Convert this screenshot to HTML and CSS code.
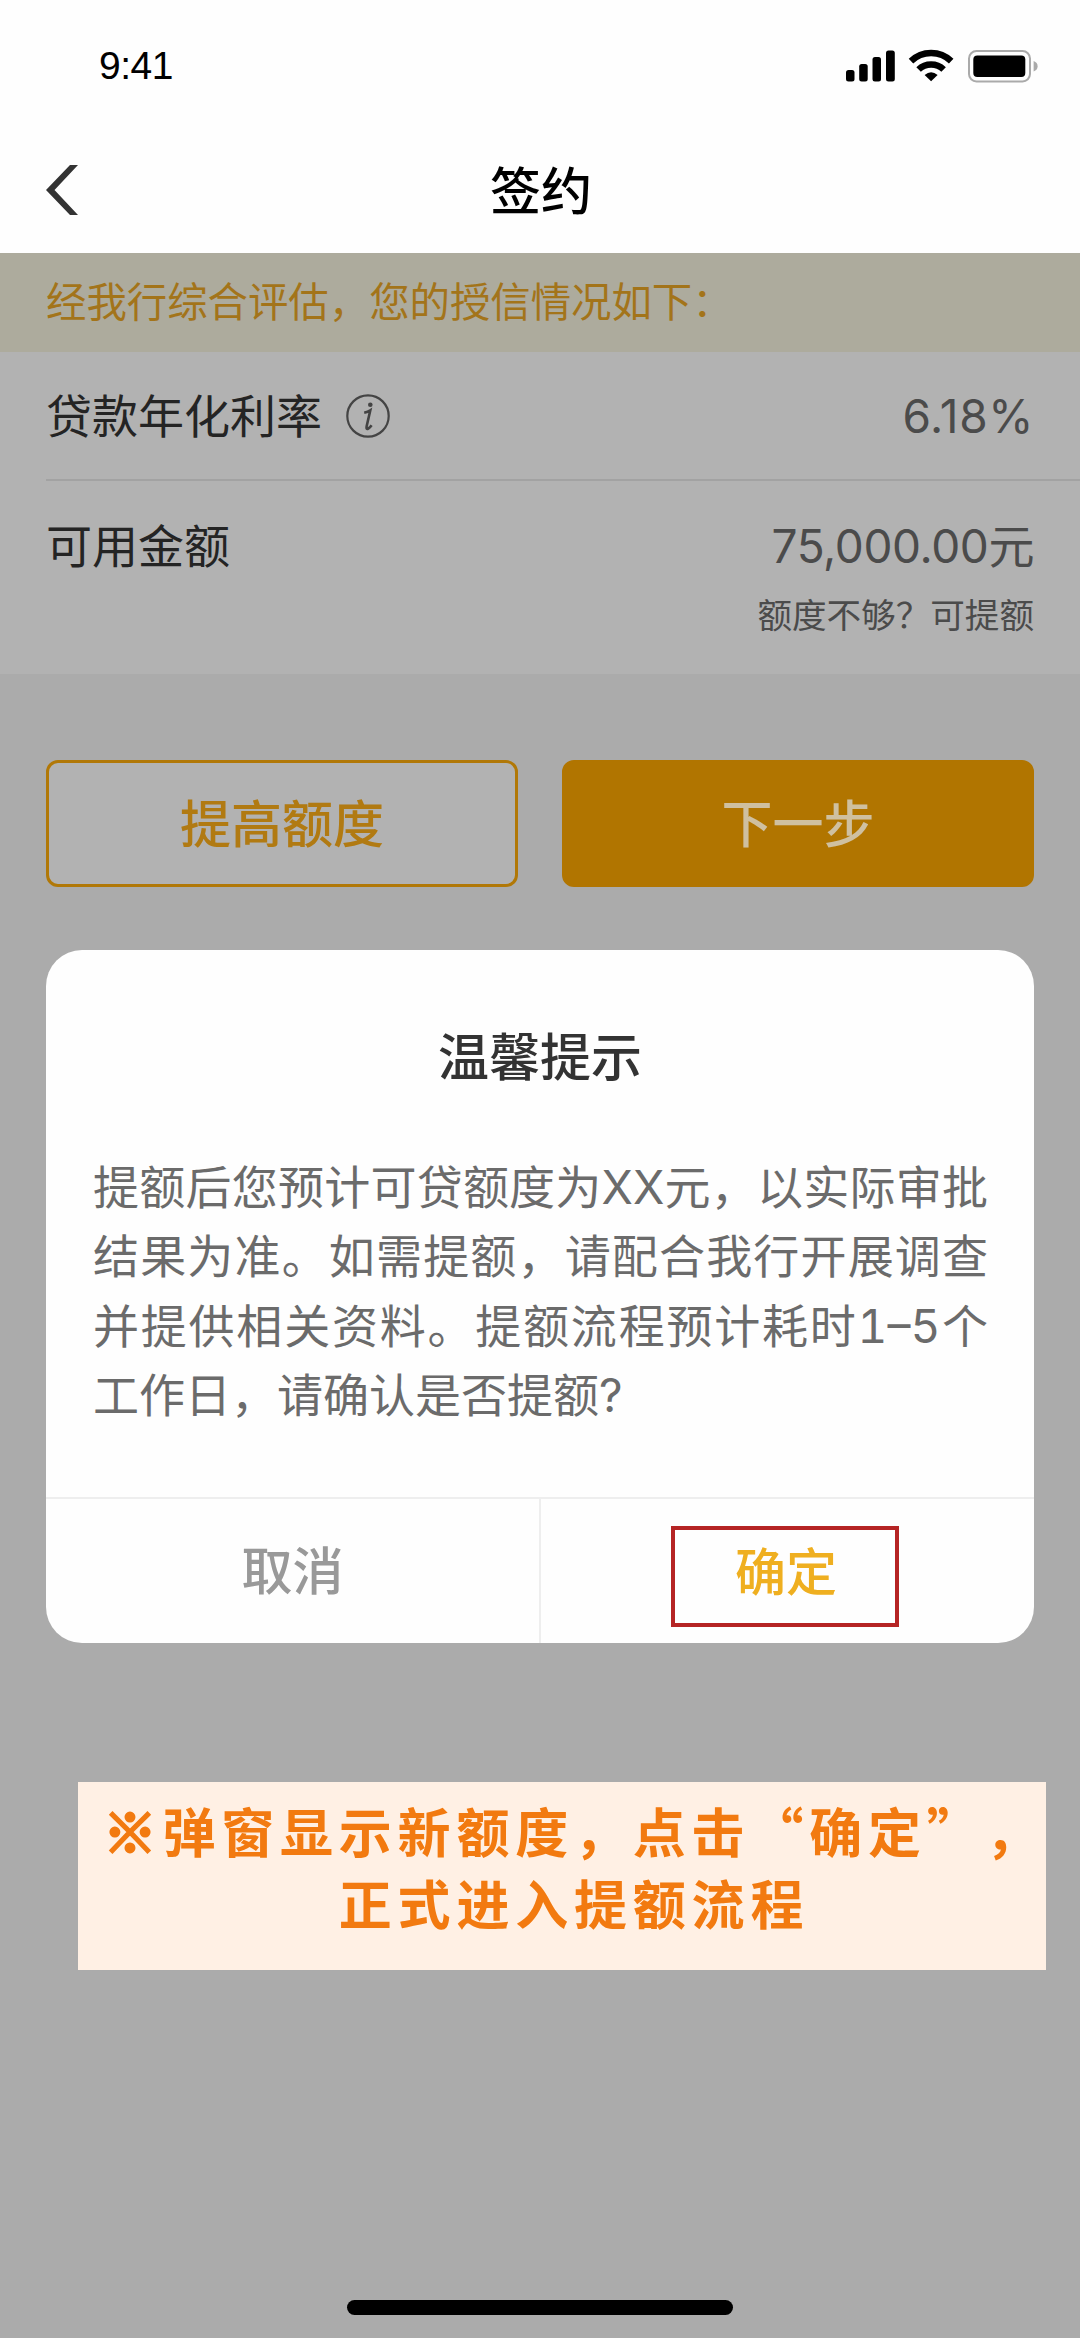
FILE: index.html
```html
<!DOCTYPE html>
<html lang="zh-CN">
<head>
<meta charset="utf-8">
<title>签约</title>
<link rel="stylesheet" href="styles.css">
</head>
<body>
<div class="screen">
  <header class="top">
    <div class="status">
      <span class="time">9:41</span>
      <svg class="status-icons" width="194" height="34" viewBox="845 49 194 34">
        <rect x="846" y="70" width="8.500" height="11.500" rx="2.500"/>
        <rect x="859.200" y="64" width="8.500" height="17.500" rx="2.500"/>
        <rect x="872.500" y="57" width="8.500" height="24.500" rx="2.500"/>
        <rect x="886" y="50.500" width="8.800" height="31" rx="2.500"/>
        <g fill="none" stroke="#000" stroke-width="6.500">
          <path d="M911 61.200A29 29 0 0 1 951.200 61.200"/>
          <path d="M918.600 69.500A18 18 0 0 1 943.600 69.500"/>
        </g>
        <path d="M924.600 75Q931.100 69.500 937.600 75L931.100 81.200Z"/>
        <rect x="969" y="51" width="61" height="30.500" rx="7.500" fill="none" stroke="#aaa" stroke-width="2"/>
        <rect x="973.300" y="55.500" width="52" height="21.500" rx="4"/>
        <path d="M1033.600 61Q1037.600 62.500 1037.600 66.200T1033.600 71.500Z" fill="#aaa"/>
      </svg>
    </div>
    <nav class="nav">
      <svg class="back" width="32" height="50" viewBox="0 0 32 50"><path d="M24 0H32L8.500 25L32 50H24L0 25Z" fill="#333"/></svg>
      <h1 class="nav-title">签约</h1>
    </nav>
  </header>

  <p class="notice">经我行综合评估，您的授信情况如下：</p>

  <section class="info">
    <div class="row rate">
      <span class="label">贷款年化利率</span>
      <svg class="info-icon" width="44" height="44" viewBox="0 0 44 44">
        <circle cx="22" cy="22" r="20.700" fill="none" stroke="#444" stroke-width="2.200"/>
        <circle cx="24.300" cy="10.800" r="2.300" fill="#444"/>
        <path d="M18.200 18.700Q22 17.800 24.300 16.300L20.600 32.500Q20 35.800 22.300 34.500Q24 33.500 25.600 31.200" fill="none" stroke="#444" stroke-width="2.600"/>
      </svg>
      <span class="value">6.18%</span>
    </div>
    <div class="row amount">
      <span class="label">可用金额</span>
      <div class="amount-values">
        <span class="value">75,000.00元</span>
        <span class="hint">额度不够？可提额</span>
      </div>
    </div>
  </section>

  <div class="actions">
    <button class="btn outline">提高额度</button>
    <button class="btn solid">下一步</button>
  </div>

  <section class="dialog">
    <h2 class="dialog-title">温馨提示</h2>
    <div class="dialog-body">
      <p class="line">提额后您预计可贷额度为XX元，以实际审批</p>
      <p class="line">结果为准。如需提额，请配合我行开展调查</p>
      <p class="line">并提供相关资料。提额流程预计耗时1–5个</p>
      <p class="line last">工作日，请确认是否提额?</p>
    </div>
    <div class="dialog-actions">
      <div class="cell cancel">取消</div>
      <div class="cell confirm"><span class="mark">确定</span></div>
    </div>
  </section>

  <div class="callout">
    <p><span class="bullet">※</span>弹窗显示新额度，点击“确定”，</p>
    <p>正式进入提额流程</p>
  </div>

  <div class="home"></div>
</div>
</body>
</html>
```
FILE: styles.css
```css
* { box-sizing: border-box; margin: 0; padding: 0; }

body {
  background: #ababab;
  font-family: Inter, "Noto Sans CJK SC", sans-serif;
  text-spacing-trim: space-all;
}

.screen {
  width: 1080px;
  height: 2338px;
  display: flex;
  flex-direction: column;
  overflow: hidden;
}

.top { height: 253px; background: #fefefe; flex: none; }

.status {
  height: 132px;
  padding: 0 41px 0 99px;
  display: flex;
  align-items: center;
  justify-content: space-between;
}
.time {
  font: 39px/44px "Liberation Sans", sans-serif;
  letter-spacing: -.5px;
}

.nav { height: 116px; padding: 0 46px; display: flex; align-items: center; }
.nav-title {
  flex: 1;
  margin-right: 30px;
  padding-top: 3px;
  text-align: center;
  font-size: 51px;
  line-height: 60px;
  font-weight: 500;
}

.notice {
  height: 99px;
  padding-left: 46px;
  flex: none;
  background: #adab9d;
  color: #a3741a;
  font-size: 40.4px;
  line-height: 99px;
}

.info { height: 322px; flex: none; background: #b2b2b2; color: #4b4b4b; }
.row { display: flex; padding-right: 46px; margin-left: 46px; }
.rate { height: 129px; align-items: center; border-bottom: 2px solid #a2a2a2; }
.label { padding-top: 1px; font-size: 46px; line-height: 60px; color: #242424; }
.info-icon { margin-left: 24px; }
.value { padding-top: 1px; font-size: 46px; line-height: 60px; letter-spacing: -.4px; }
.rate .value { margin-left: auto; letter-spacing: .6px; }
.amount { justify-content: space-between; padding-top: 34px; }
.amount-values { display: flex; flex-direction: column; align-items: flex-end; }
.hint { font-size: 34.6px; line-height: 50px; margin-top: 14px; }

.actions { display: flex; gap: 44px; padding: 86px 46px 0; flex: none; }
.btn {
  flex: 1;
  height: 127px;
  padding-top: 3px;
  border: 3px solid #b17807;
  border-radius: 12px;
  font: 500 51px/118px Inter, "Noto Sans CJK SC", sans-serif;
}
.outline { background: #b2b2b2; color: #b17a12; }
.solid { background: #b17500; border-color: #b17500; color: #cfc0a0; }

.dialog {
  margin: 63px 46px 0;
  height: 693px;
  flex: none;
  display: flex;
  flex-direction: column;
  background: #fefefe;
  border-radius: 36px;
}
.dialog-title {
  margin-top: 77px;
  text-align: center;
  color: #333;
  font-size: 51px;
  line-height: 62px;
  font-weight: 500;
}
.dialog-body {
  margin: 64px 46px 0 47px;
  color: #6b6b6b;
  font-size: 46px;
  font-variant-numeric: tabular-nums;
}
.line { line-height: 69.3px; text-align: justify; text-align-last: justify; text-justify: inter-character; white-space: nowrap; }
.last { text-align-last: left; }
.dialog-actions { margin-top: auto; height: 146px; display: flex; border-top: 2px solid #eee; }
.cell { flex: 1; display: flex; justify-content: center; font-size: 51px; font-weight: 500; }
.cancel { color: #999; border-right: 2px solid #eee; line-height: 145px; }
.mark {
  width: 228px;
  height: 101px;
  margin: 27px 5px 0 0;
  padding-left: 2px;
  border: 4px solid #b52424;
  color: #efaf20;
  line-height: 85px;
  text-align: center;
}

.callout {
  width: 968px;
  height: 188px;
  margin: 139px 0 0 78px;
  padding: 12px 0 0 24px;
  flex: none;
  background: #fff0e4;
  color: #f27a10;
  font-family: "Noto Sans CJK SC", sans-serif;
  font-size: 53px;
  font-weight: 700;
  letter-spacing: 5.8px;
  line-height: 72px;
  text-align: center;
  white-space: nowrap;
}
.bullet { -webkit-text-stroke: 3px #f27a10; }

.home { width: 386px; height: 15px; margin: auto auto 23px; border-radius: 8px; background: #000; }
```
